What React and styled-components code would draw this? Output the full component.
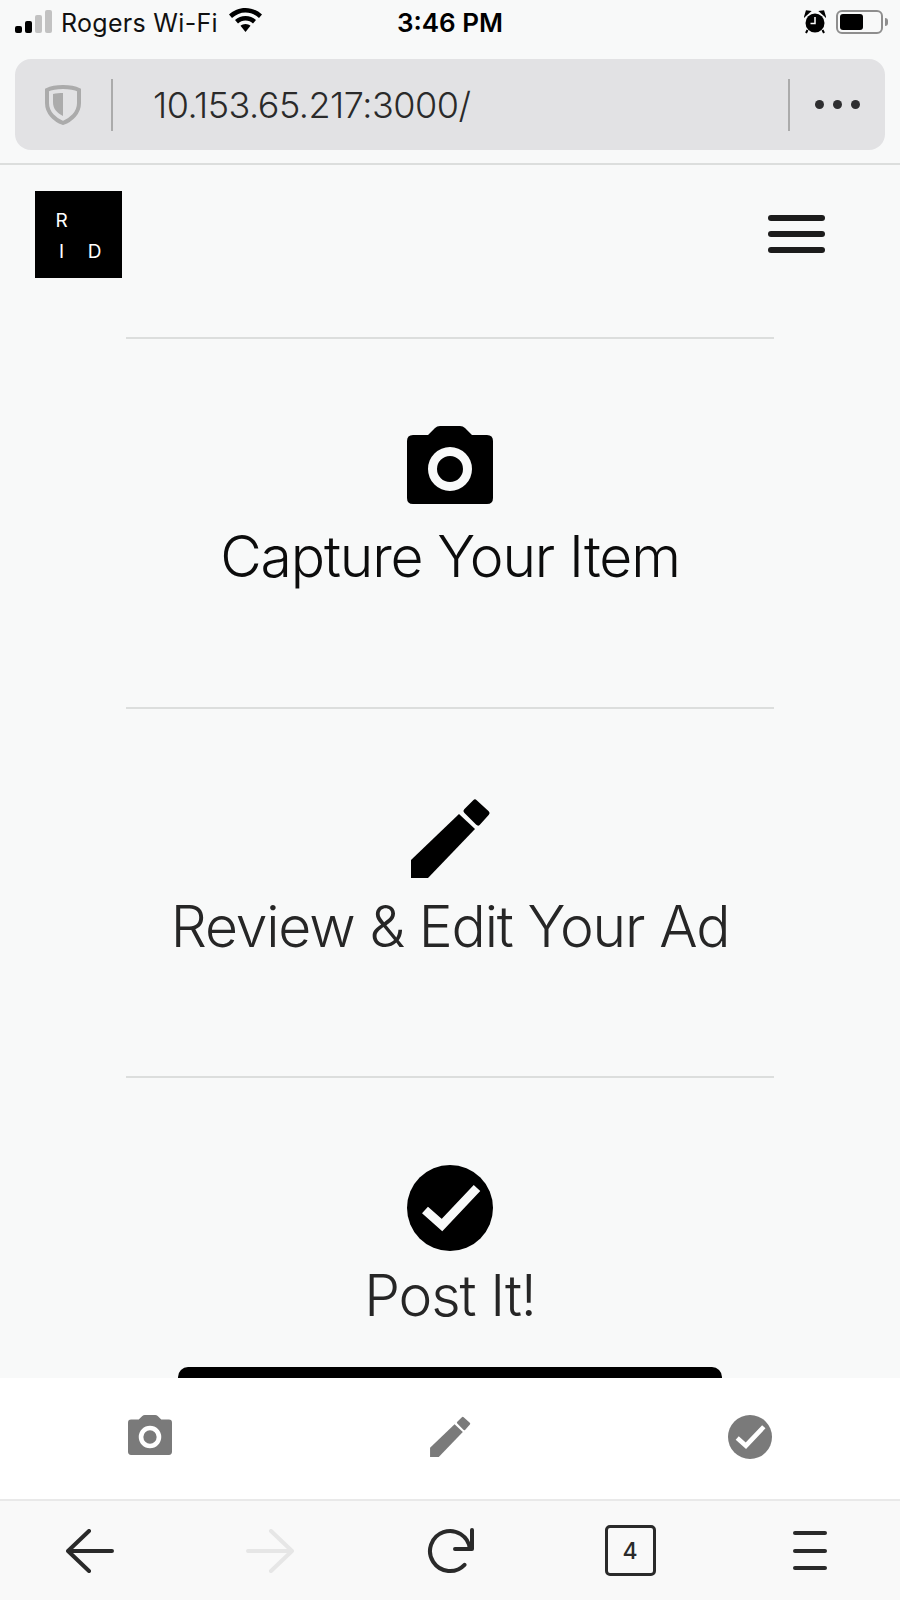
import styled, { createGlobalStyle } from "styled-components"

const PAGE_BG = "#f8f9f9"
const LINE = "#dcdedd"

const GlobalStyle = createGlobalStyle`
html, body {
    margin: 0;
    padding: 0;
    background: ${PAGE_BG};
}
* {
    box-sizing: border-box;
}
`

//the whole phone screen
const Screen = styled.div`
width: 900px;
height: 1600px;
display: flex;
flex-direction: column;
overflow: hidden;
background: ${PAGE_BG};
font-family: Inter, "Liberation Sans", sans-serif;
color: #000;
`

// ios status bar
const StatusBar = styled.div`
height: 59px;
flex: none;
display: grid;
grid-template-columns: 1fr auto 1fr;
align-items: start;
padding: 8px 15px 0;
`
const StatusLeft = styled.div`
display: flex;
align-items: flex-start;
`
const StatusRight = styled.div`
display: flex;
justify-content: flex-end;
align-items: flex-start;
gap: 10px;
padding: 2px 2px 0 0;
`
const Signal = styled.div`
display: flex;
align-items: flex-end;
gap: 3px;
height: 25px;
width: 37px;
`
const SignalBar = styled.span`
width: 7px;
height: ${(p) => p.$h}px;
border-radius: 2px;
background: ${(p) => (p.$on ? "#000" : "#c2c2c2")};
`
const Carrier = styled.span`
font-size: 25px;
line-height: 30px;
margin: 0 11px 0 9px;
letter-spacing: 0.3px;
color: #111;
`
const Clock = styled.span`
font-size: 26px;
line-height: 30px;
font-weight: 600;
`
const Battery = styled.div`
width: 47px;
height: 24px;
border: 2px solid #8e8e8e;
border-radius: 6px;
padding: 2px;
position: relative;
&::after {
    content: "";
    position: absolute;
    right: -7px;
    top: 6px;
    width: 3px;
    height: 8px;
    border-radius: 0 3px 3px 0;
    background: #8e8e8e;
}
`
const BatteryLevel = styled.div`
width: 23px;
height: 100%;
border-radius: 3px;
background: #000;
`

// address bar of the browser
const UrlWrap = styled.div`
flex: none;
height: 106px;
padding: 0 15px;
border-bottom: 2px solid ${LINE};
`
const UrlBar = styled.div`
height: 91px;
display: flex;
align-items: center;
border-radius: 16px;
background: #e2e2e4;
`
const ShieldBox = styled.div`
width: 96px;
display: flex;
justify-content: center;
`
const UrlSep = styled.span`
width: 2px;
height: 52px;
background: #ababab;
flex: none;
`
const UrlText = styled.span`
flex: 1;
padding-left: 40px;
font-size: 36px;
font-weight: 300;
letter-spacing: -0.5px;
color: #2a2a2a;
`
const More = styled.div`
width: 95px;
display: flex;
justify-content: center;
gap: 9px;
`
const Dot = styled.span`
width: 9px;
height: 9px;
border-radius: 50%;
background: #2e2e30;
`

//scrolling page under the address bar
const Main = styled.main`
flex: 1;
min-height: 0;
overflow: hidden;
`
const Header = styled.header`
height: 172px;
display: flex;
justify-content: space-between;
align-items: flex-start;
padding: 26px 75px 0 35px;
`
const Logo = styled.div`
width: 87px;
height: 87px;
background: #000;
color: #fff;
display: grid;
grid-template-columns: 33px 33px;
grid-auto-rows: 31px;
padding: 14px 0 0 10px;
font-size: 19px;
line-height: 31px;
text-align: center;
`
const Burger = styled.div`
width: 57px;
margin-top: 24px;
display: flex;
flex-direction: column;
gap: 10px;
`
const BurgerBar = styled.span`
height: 6px;
border-radius: 3px;
background: #1c1c1c;
`

const Step = styled.section`
width: 648px;
height: 369.5px;
margin: 0 auto;
padding-top: 87px;
border-top: 2px solid ${LINE};
display: flex;
flex-direction: column;
align-items: center;
`
const StepTitle = styled.h2`
margin: 10px 0 0;
font-size: 57px;
line-height: 70px;
font-weight: 300;
letter-spacing: -1.15px;
white-space: nowrap;
color: ${(p) => p.$color};
`
const PostButton = styled.button`
flex: none;
width: 544px;
height: 60px;
margin-top: 36px;
border: none;
border-radius: 10px;
background: #000;
`

// white bar with the 3 step icons
const StepBar = styled.nav`
flex: none;
height: 123px;
display: grid;
grid-template-columns: repeat(3, 1fr);
justify-items: center;
padding-top: 37px;
background: #fff;
border-bottom: 2px solid #e9e9e9;
color: #7a7a7a;
`

//browser toolbar
const Toolbar = styled.div`
flex: none;
height: 99px;
display: grid;
grid-template-columns: repeat(5, 1fr);
justify-items: center;
align-items: center;
background: #f9f9f9;
color: #2a2a2a;
`
const TabCount = styled.div`
width: 51px;
height: 51px;
border: 3px solid #2a2a2a;
border-radius: 5px;
display: flex;
align-items: center;
justify-content: center;
font-size: 23px;
font-weight: 500;
`
const MenuLines = styled.div`
width: 34px;
display: flex;
flex-direction: column;
gap: 13.5px;
`
const MenuLine = styled.span`
height: 4px;
border-radius: 2px;
background: #2a2a2a;
`

function CameraIcon({ size }) {
    return (
        <svg width={size} height={size} viewBox="0 0 86 86" fill="currentColor">
            <path
                fillRule="evenodd"
                d="M6 9H21L28 2Q30 0 33 0H53Q56 0 58 2L65 9H80Q86 9 86 15V72Q86 78 80 78H6Q0 78 0 72V15Q0 9 6 9ZM43 21A22 22 0 1 0 43 65A22 22 0 1 0 43 21ZM43 30A13 13 0 1 1 43 56A13 13 0 1 1 43 30Z"
            />
        </svg>
    )
}

function PencilIcon({ size }) {
    return (
        <svg width={size} height={size} viewBox="0 0 86 86" fill="currentColor">
            <path d="M4 64L52 18L68 33L21 82H4Z" />
            <path d="M68 6L80 17L71 27L59 15Z" stroke="currentColor" strokeWidth="5" strokeLinejoin="round" />
        </svg>
    )
}

function CheckIcon({ size, cut }) {
    return (
        <svg width={size} height={size} viewBox="0 0 86 86">
            <circle cx="43" cy="43" r="43" fill="currentColor" />
            <path d="M18 45L35 60L70 23" fill="none" stroke={cut} strokeWidth="9" />
        </svg>
    )
}

function ShieldIcon() {
    return (
        <svg width="36" height="40" viewBox="0 0 36 40">
            <path d="M18 2C24 2 30 3 34 5V18C34 28 26 35 18 38C10 35 2 28 2 18V5C6 3 12 2 18 2Z" fill="none" stroke="#ababab" strokeWidth="4" />
            <path d="M18 8V31C12 28 8 24 8 17V9C11 8 15 8 18 8Z" fill="#ababab" />
        </svg>
    )
}

function WifiIcon() {
    return (
        <svg width="33" height="24" viewBox="0 0 33 24" fill="#000">
            <path d="M16.5 0C23 0 28.5 2.500 33 6.500L30 10C26 6.500 21.500 4.500 16.500 4.500C11.500 4.500 7 6.500 3 10L0 6.500C4.500 2.500 10 0 16.500 0Z" />
            <path d="M16.500 8C20.500 8 24 9.500 27 12L24 15.500C22 13.700 19.500 12.500 16.500 12.500C13.500 12.500 11 13.700 9 15.500L6 12C9 9.500 12.500 8 16.500 8Z" />
            <path d="M16.500 16C18.500 16 20 16.700 21.500 17.800L16.500 24L11.500 17.800C13 16.700 14.500 16 16.500 16Z" />
        </svg>
    )
}

function AlarmIcon() {
    return (
        <svg width="22" height="24" viewBox="0 0 22 24">
            <circle cx="11" cy="13" r="9.500" fill="#000" />
            <path d="M1 6L6 1.500L2.500 1ZM21 6L16 1.500L19.500 1Z" fill="#000" stroke="#000" strokeWidth="1.500" />
            <path d="M3.500 20L2 23M18.500 20L20 23" stroke="#000" strokeWidth="2" />
            <path d="M11 7V13.500H6.500" fill="none" stroke="#fff" strokeWidth="1.500" />
        </svg>
    )
}

function ArrowIcon({ flip, color }) {
    return (
        <svg width="48" height="44" viewBox="0 0 48 44" fill="none" stroke={color} strokeWidth="4" strokeLinecap="round" strokeLinejoin="round" transform={flip ? "scale(-1 1)" : undefined}>
            <path d="M23 2L2 22L23 42M2 22H46" />
        </svg>
    )
}

function ReloadIcon() {
    return (
        <svg width="52" height="48" viewBox="0 0 52 48" fill="none" stroke="#2a2a2a" strokeWidth="4" strokeLinecap="round" strokeLinejoin="round">
            <path d="M40.500 37.800A20 20 0 1 1 45.900 22" />
            <path d="M48 3V22H31" />
        </svg>
    )
}

export default function App() {
    return (
        <Screen>
            <GlobalStyle />
            <StatusBar>
                <StatusLeft>
                    <Signal>
                        <SignalBar $h={7} $on />
                        <SignalBar $h={12} $on />
                        <SignalBar $h={18} />
                        <SignalBar $h={23} />
                    </Signal>
                    <Carrier>Rogers Wi-Fi</Carrier>
                    <WifiIcon />
                </StatusLeft>
                <Clock>3:46 PM</Clock>
                <StatusRight>
                    <AlarmIcon />
                    <Battery>
                        <BatteryLevel />
                    </Battery>
                </StatusRight>
            </StatusBar>

            <UrlWrap>
                <UrlBar>
                    <ShieldBox>
                        <ShieldIcon />
                    </ShieldBox>
                    <UrlSep />
                    <UrlText>10.153.65.217:3000/</UrlText>
                    <UrlSep />
                    <More>
                        <Dot />
                        <Dot />
                        <Dot />
                    </More>
                </UrlBar>
            </UrlWrap>

            <Main>
                <Header>
                    <Logo>
                        <span>R</span>
                        <span></span>
                        <span>I</span>
                        <span>D</span>
                    </Logo>
                    <Burger>
                        <BurgerBar />
                        <BurgerBar />
                        <BurgerBar />
                    </Burger>
                </Header>

                <Step>
                    <CameraIcon size={86} />
                    <StepTitle $color="#0c0c0c">Capture Your Item</StepTitle>
                </Step>
                <Step>
                    <PencilIcon size={86} />
                    <StepTitle $color="#262626">Review &amp; Edit Your Ad</StepTitle>
                </Step>
                <Step>
                    <CheckIcon size={86} cut={PAGE_BG} />
                    <StepTitle $color="#262626">Post It!</StepTitle>
                    <PostButton />
                </Step>
            </Main>

            <StepBar>
                <CameraIcon size={44} />
                <PencilIcon size={44} />
                <CheckIcon size={44} cut="#fff" />
            </StepBar>

            <Toolbar>
                <ArrowIcon color="#2a2a2a" />
                <ArrowIcon flip color="#e6e6e6" />
                <ReloadIcon />
                <TabCount>4</TabCount>
                <MenuLines>
                    <MenuLine />
                    <MenuLine />
                    <MenuLine />
                </MenuLines>
            </Toolbar>
        </Screen>
    )
}
